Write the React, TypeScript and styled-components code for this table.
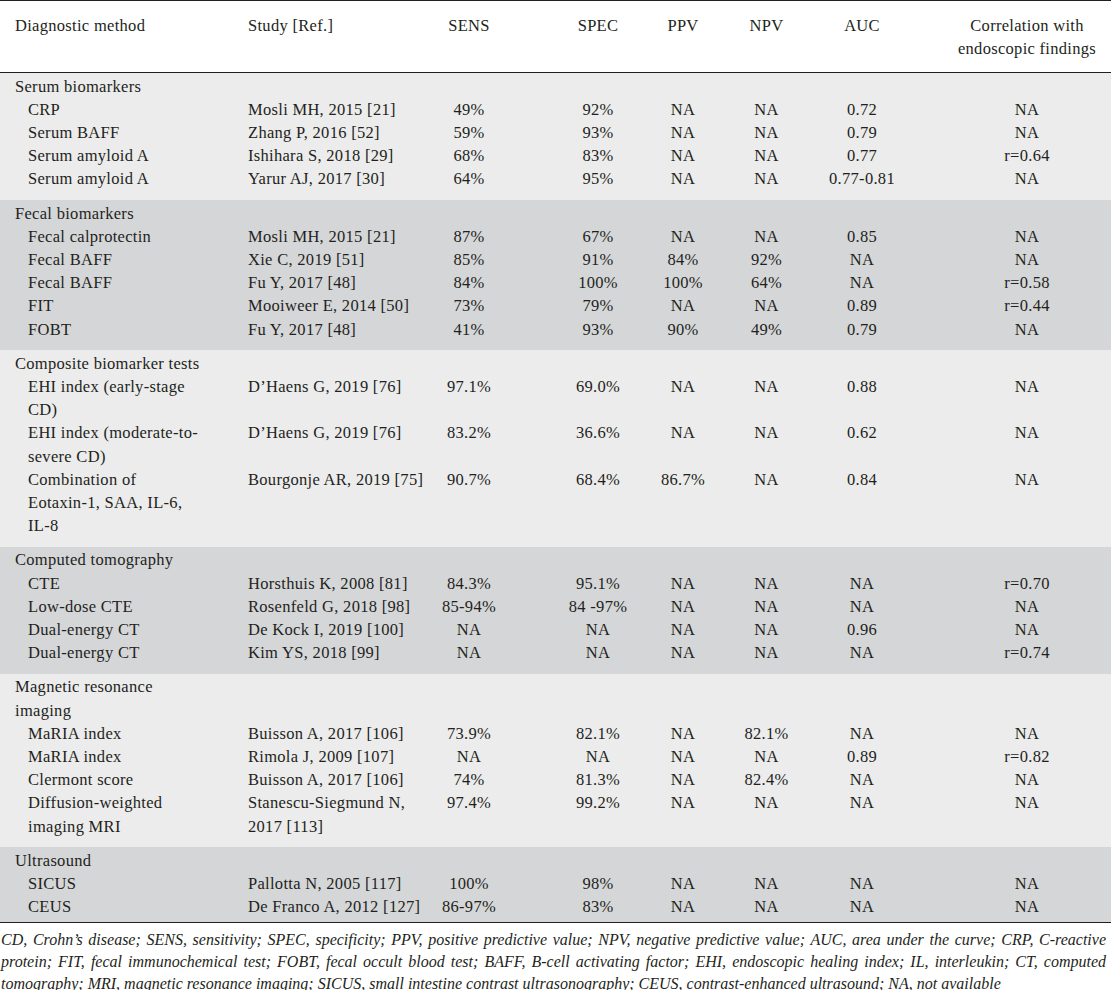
import React from "react";
import styled, { createGlobalStyle } from "styled-components";

const GlobalStyle = createGlobalStyle`
  html, body { margin: 0; padding: 0; background: #ffffff; }
  body {
    font-family: "Liberation Serif", "Times New Roman", serif;
    color: #231f20;
  }
`;

type ColSpec = { w: number; align: "left" | "center"; pl: number; pr: number };

const COLS: ColSpec[] = [
  { w: 248, align: "left", pl: 15, pr: 0 },
  { w: 157, align: "left", pl: 0, pr: 0 },
  { w: 128, align: "center", pl: 0, pr: 0 },
  { w: 108, align: "center", pl: 22, pr: 0 },
  { w: 84, align: "center", pl: 0, pr: 0 },
  { w: 89, align: "center", pl: 0, pr: 6 },
  { w: 133, align: "center", pl: 0, pr: 37 },
  { w: 164, align: "center", pl: 0, pr: 4 },
];

const Page = styled.div`
  width: 1111px;
`;

const Table = styled.table`
  width: 1111px;
  table-layout: fixed;
  border-collapse: collapse;
  border-spacing: 0;
  font-size: 16.5px;
  letter-spacing: 0.3px;
  line-height: 23.2px;
  border-top: 1.5px solid #231f20;
  border-bottom: 1px solid #231f20;
`;

const Col = styled.col<{ $w: number }>`
  width: ${(p) => p.$w}px;
`;

const Head = styled.thead`
  border-bottom: 1px solid #231f20;
`;

const HeadCell = styled.th<{ $c: ColSpec }>`
  font-weight: normal;
  vertical-align: top;
  line-height: 23px;
  text-align: ${(p) => p.$c.align};
  padding: 13px ${(p) => p.$c.pr}px 12px ${(p) => p.$c.pl}px;
  white-space: nowrap;
`;

const Section = styled.tbody<{ $shade: "light" | "dark"; $last?: boolean }>`
  background: ${(p) => (p.$shade === "light" ? "#ececec" : "#d5d6d8")};
  & > tr:first-child > td {
    padding-top: 1.5px;
  }
  & > tr:last-child > td {
    padding-bottom: ${(p) => (p.$last ? 4 : 9.5)}px;
  }
`;

const SectionTitle = styled.td`
  padding: 0 0 0 15px;
  text-align: left;
  white-space: nowrap;
`;

const Cell = styled.td<{ $c: ColSpec; $indent?: boolean }>`
  vertical-align: top;
  text-align: ${(p) => p.$c.align};
  padding: 0 ${(p) => p.$c.pr}px 0 ${(p) => (p.$indent ? 28 : p.$c.pl)}px;
  white-space: nowrap;
`;

const Footnote = styled.div`
  font-style: italic;
  font-size: 16px;
  letter-spacing: 0;
  line-height: 22px;
  padding: 6px 5px 0 1px;
`;

const FootLine = styled.div<{ $justify?: boolean }>`
  text-align: ${(p) => (p.$justify ? "justify" : "left")};
  text-align-last: ${(p) => (p.$justify ? "justify" : "left")};
`;

type Row = [string[], string[], string, string, string, string, string, string];
type SectionData = { title: string[]; shade: "light" | "dark"; rows: Row[] };

const SECTIONS: SectionData[] = [
  {
    title: ["Serum biomarkers"],
    shade: "light",
    rows: [
      [["CRP"], ["Mosli MH, 2015 [21]"], "49%", "92%", "NA", "NA", "0.72", "NA"],
      [["Serum BAFF"], ["Zhang P, 2016 [52]"], "59%", "93%", "NA", "NA", "0.79", "NA"],
      [["Serum amyloid A"], ["Ishihara S, 2018 [29]"], "68%", "83%", "NA", "NA", "0.77", "r=0.64"],
      [["Serum amyloid A"], ["Yarur AJ, 2017 [30]"], "64%", "95%", "NA", "NA", "0.77-0.81", "NA"],
    ],
  },
  {
    title: ["Fecal biomarkers"],
    shade: "dark",
    rows: [
      [["Fecal calprotectin"], ["Mosli MH, 2015 [21]"], "87%", "67%", "NA", "NA", "0.85", "NA"],
      [["Fecal BAFF"], ["Xie C, 2019 [51]"], "85%", "91%", "84%", "92%", "NA", "NA"],
      [["Fecal BAFF"], ["Fu Y, 2017 [48]"], "84%", "100%", "100%", "64%", "NA", "r=0.58"],
      [["FIT"], ["Mooiweer E, 2014 [50]"], "73%", "79%", "NA", "NA", "0.89", "r=0.44"],
      [["FOBT"], ["Fu Y, 2017 [48]"], "41%", "93%", "90%", "49%", "0.79", "NA"],
    ],
  },
  {
    title: ["Composite biomarker tests"],
    shade: "light",
    rows: [
      [["EHI index (early-stage", "CD)"], ["D\u2019Haens G, 2019 [76]"], "97.1%", "69.0%", "NA", "NA", "0.88", "NA"],
      [["EHI index (moderate-to-", "severe CD)"], ["D\u2019Haens G, 2019 [76]"], "83.2%", "36.6%", "NA", "NA", "0.62", "NA"],
      [["Combination of", "Eotaxin-1, SAA, IL-6,", "IL-8"], ["Bourgonje AR, 2019 [75]"], "90.7%", "68.4%", "86.7%", "NA", "0.84", "NA"],
    ],
  },
  {
    title: ["Computed tomography"],
    shade: "dark",
    rows: [
      [["CTE"], ["Horsthuis K, 2008 [81]"], "84.3%", "95.1%", "NA", "NA", "NA", "r=0.70"],
      [["Low-dose CTE"], ["Rosenfeld G, 2018 [98]"], "85-94%", "84 -97%", "NA", "NA", "NA", "NA"],
      [["Dual-energy CT"], ["De Kock I, 2019 [100]"], "NA", "NA", "NA", "NA", "0.96", "NA"],
      [["Dual-energy CT"], ["Kim YS, 2018 [99]"], "NA", "NA", "NA", "NA", "NA", "r=0.74"],
    ],
  },
  {
    title: ["Magnetic resonance", "imaging"],
    shade: "light",
    rows: [
      [["MaRIA index"], ["Buisson A, 2017 [106]"], "73.9%", "82.1%", "NA", "82.1%", "NA", "NA"],
      [["MaRIA index"], ["Rimola J, 2009 [107]"], "NA", "NA", "NA", "NA", "0.89", "r=0.82"],
      [["Clermont score"], ["Buisson A, 2017 [106]"], "74%", "81.3%", "NA", "82.4%", "NA", "NA"],
      [["Diffusion-weighted", "imaging MRI"], ["Stanescu-Siegmund N,", "2017 [113]"], "97.4%", "99.2%", "NA", "NA", "NA", "NA"],
    ],
  },
  {
    title: ["Ultrasound"],
    shade: "dark",
    rows: [
      [["SICUS"], ["Pallotta N, 2005 [117]"], "100%", "98%", "NA", "NA", "NA", "NA"],
      [["CEUS"], ["De Franco A, 2012 [127]"], "86-97%", "83%", "NA", "NA", "NA", "NA"],
    ],
  },
];

const HEADERS: string[][] = [
  ["Diagnostic method"],
  ["Study [Ref.]"],
  ["SENS"],
  ["SPEC"],
  ["PPV"],
  ["NPV"],
  ["AUC"],
  ["Correlation with", "endoscopic findings"],
];

const Lines: React.FC<{ lines: string[] }> = ({ lines }) => (
  <>
    {lines.map((l, i) => (
      <React.Fragment key={i}>
        {i > 0 && <br />}
        {l}
      </React.Fragment>
    ))}
  </>
);

export default function App() {
  return (
    <Page>
      <GlobalStyle />
      <Table>
        <colgroup>
          {COLS.map((c, i) => (
            <Col key={i} $w={c.w} />
          ))}
        </colgroup>
        <Head>
          <tr>
            {HEADERS.map((h, i) => (
              <HeadCell key={i} $c={COLS[i]}>
                <Lines lines={h} />
              </HeadCell>
            ))}
          </tr>
        </Head>
        {SECTIONS.map((s, si) => (
          <Section key={si} $shade={s.shade} $last={si === SECTIONS.length - 1}>
            <tr>
              <SectionTitle colSpan={8}>
                <Lines lines={s.title} />
              </SectionTitle>
            </tr>
            {s.rows.map((r, ri) => (
              <tr key={ri}>
                <Cell $c={COLS[0]} $indent>
                  <Lines lines={r[0]} />
                </Cell>
                <Cell $c={COLS[1]}>
                  <Lines lines={r[1]} />
                </Cell>
                {(r.slice(2) as string[]).map((v, vi) => (
                  <Cell key={vi} $c={COLS[vi + 2]}>
                    {v}
                  </Cell>
                ))}
              </tr>
            ))}
          </Section>
        ))}
      </Table>
      <Footnote>
        <FootLine $justify>
          CD, Crohn’s disease; SENS, sensitivity; SPEC, specificity; PPV, positive predictive value; NPV, negative predictive value; AUC, area under the curve; CRP, C-reactive
        </FootLine>
        <FootLine $justify>
          protein; FIT, fecal immunochemical test; FOBT, fecal occult blood test; BAFF, B-cell activating factor; EHI, endoscopic healing index; IL, interleukin; CT, computed
        </FootLine>
        <FootLine>
          tomography; MRI, magnetic resonance imaging; SICUS, small intestine contrast ultrasonography; CEUS, contrast-enhanced ultrasound; NA, not available
        </FootLine>
      </Footnote>
    </Page>
  );
}
